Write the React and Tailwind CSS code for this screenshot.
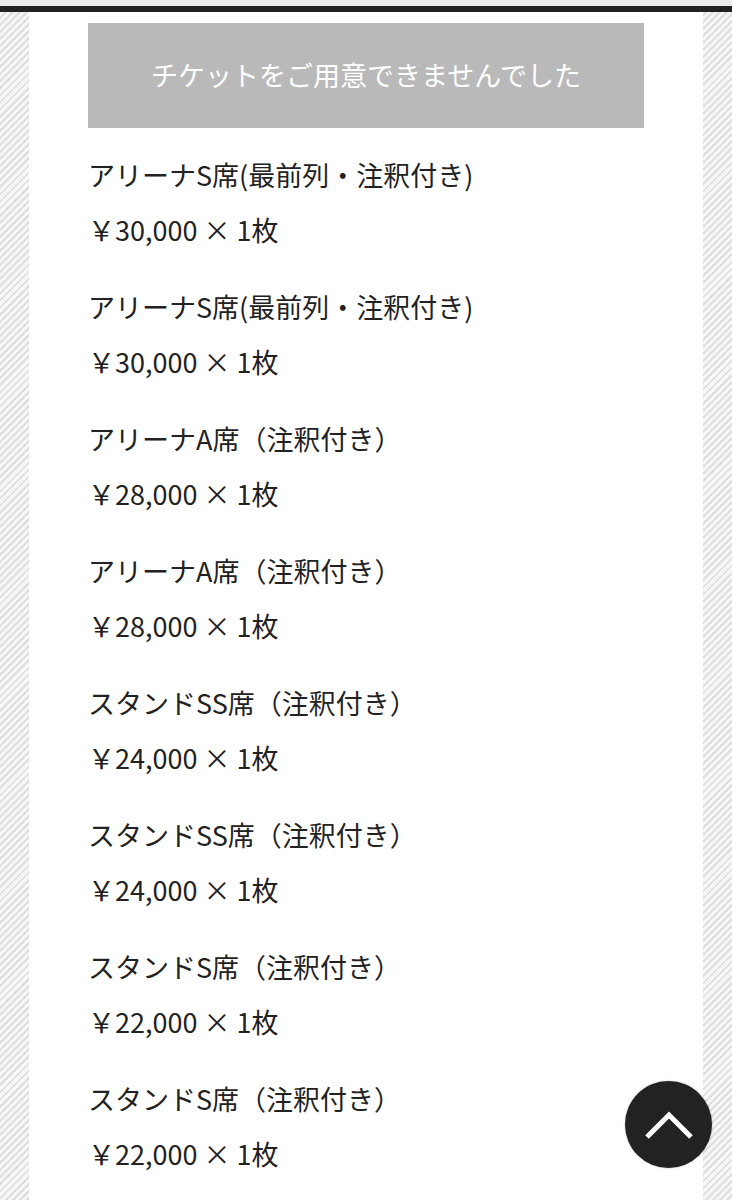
import React from 'react';

const tickets = [
    { name: 'アリーナS席(最前列・注釈付き)', price: '30,000' },
    { name: 'アリーナS席(最前列・注釈付き)', price: '30,000' },
    { name: 'アリーナA席（注釈付き）', price: '28,000' },
    { name: 'アリーナA席（注釈付き）', price: '28,000' },
    { name: 'スタンドSS席（注釈付き）', price: '24,000' },
    { name: 'スタンドSS席（注釈付き）', price: '24,000' },
    { name: 'スタンドS席（注釈付き）', price: '22,000' },
    { name: 'スタンドS席（注釈付き）', price: '22,000' },
];

export default function App() {
    return (
        <div className="relative h-[1200px] overflow-hidden bg-white font-['Noto_Sans_CJK_JP','Noto_Sans',sans-serif] text-[#222]">
            <div className="h-[6px] bg-[#ececec]" />
            <div className="h-[6px] bg-[#222]" />
            <div className="flex h-full bg-[image:repeating-linear-gradient(135deg,#f6f6f6_0,#f6f6f6_3px,#dedede_3px,#dedede_5px)]">
                <div className="ml-[29px] w-[674px] bg-white px-[59px] pt-[11px]">
                    <div className="flex h-[105px] items-center justify-center bg-[#b9b9b9] text-[27px] text-white">
                        チケットをご用意できませんでした
                    </div>
                    <div className="pt-[26px]">
                        {tickets.map((t, i) => (
                            <div key={i} className="mb-[35px] flex flex-col gap-[13px] text-[27px] leading-[42px]">
                                <div>{t.name}</div>
                                <div>￥{t.price} × 1枚</div>
                            </div>
                        ))}
                    </div>
                </div>
            </div>
            <button className="absolute left-[625px] top-[1081px] flex h-[87px] w-[87px] items-center justify-center rounded-full bg-[#222] shadow-[0_0_2px_rgba(0,0,0,0.3)]">
                <svg width="50" height="30" viewBox="0 0 50 30">
                    <path d="M3 27 L25 5 L47 27" fill="none" stroke="white" strokeWidth="5" />
                </svg>
            </button>
        </div>
    );
}
